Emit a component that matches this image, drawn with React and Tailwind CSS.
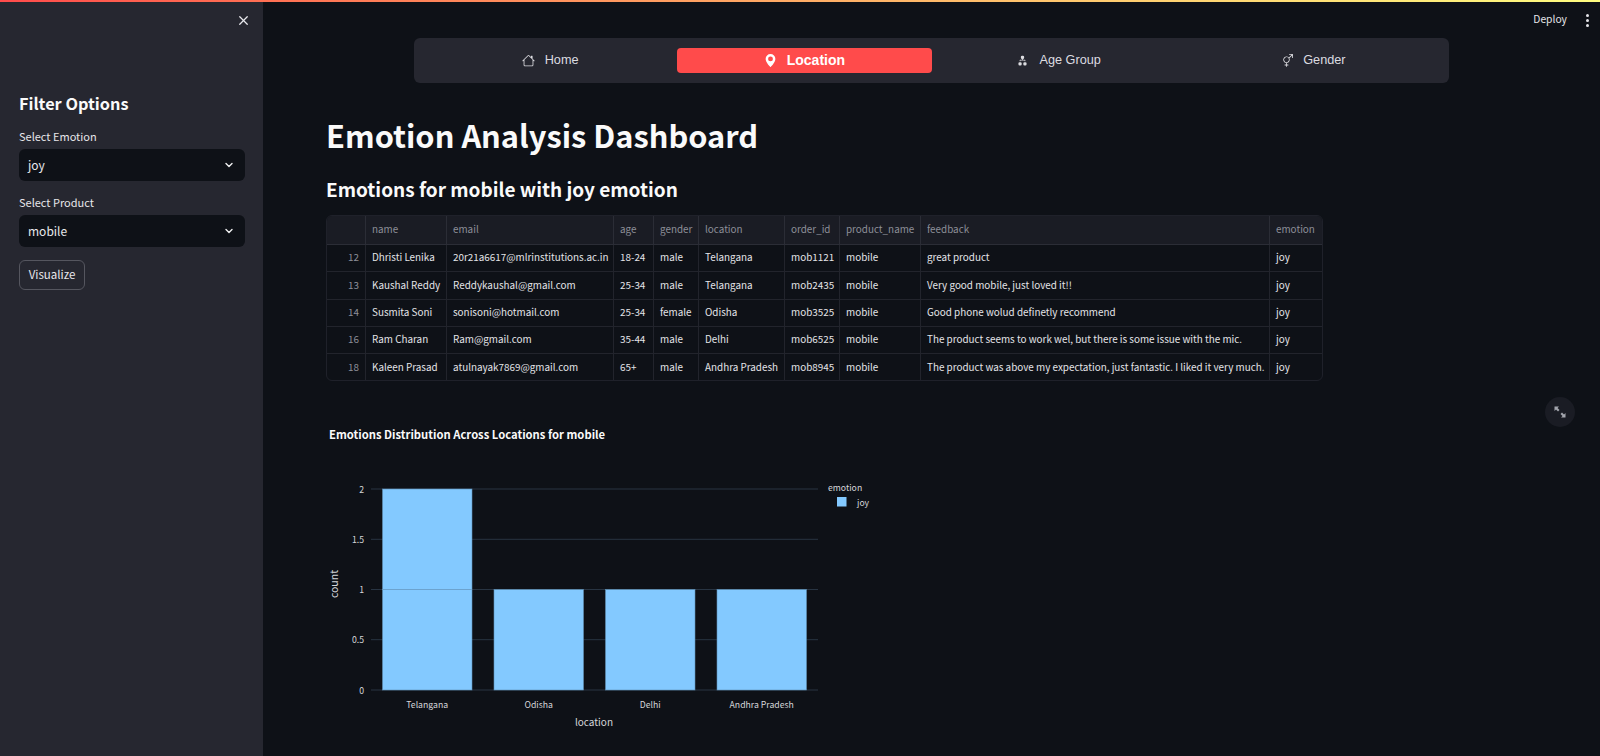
import React from 'react';
import { BsHouse, BsGeoAltFill, BsDiagram2Fill, BsGenderAmbiguous } from 'react-icons/bs';
import { X, ChevronDown } from 'lucide-react';

const FONT = 'font-["Noto_Sans_CJK_SC","Noto_Sans",sans-serif]';
const COLS = 'grid grid-cols-[39px_81px_167px_40px_45px_86px_55px_81px_349px_52px]';

const HEADERS = ['', 'name', 'email', 'age', 'gender', 'location', 'order_id', 'product_name', 'feedback', 'emotion'];
const ROWS = [
  ['12', 'Dhristi Lenika', '20r21a6617@mlrinstitutions.ac.in', '18-24', 'male', 'Telangana', 'mob1121', 'mobile', 'great product', 'joy'],
  ['13', 'Kaushal Reddy', 'Reddykaushal@gmail.com', '25-34', 'male', 'Telangana', 'mob2435', 'mobile', 'Very good mobile, just loved it!!', 'joy'],
  ['14', 'Susmita Soni', 'sonisoni@hotmail.com', '25-34', 'female', 'Odisha', 'mob3525', 'mobile', 'Good phone wolud definetly recommend', 'joy'],
  ['16', 'Ram Charan', 'Ram@gmail.com', '35-44', 'male', 'Delhi', 'mob6525', 'mobile', 'The product seems to work wel, but there is some issue with the mic.', 'joy'],
  ['18', 'Kaleen Prasad', 'atulnayak7869@gmail.com', '65+', 'male', 'Andhra Pradesh', 'mob8945', 'mobile', 'The product was above my expectation, just fantastic. I liked it very much.', 'joy'],
];

const TABS = [
  ['Home', BsHouse],
  ['Location', BsGeoAltFill],
  ['Age Group', BsDiagram2Fill],
  ['Gender', BsGenderAmbiguous],
];

function SelectBox({ label, value }) {
  return (
    <div>
      <p className="text-[11px] leading-[14px] text-[#e6e6ea]">{label}</p>
      <div className="mt-[6px] h-[32px] rounded-[6px] bg-[#0e1117] flex items-center justify-between pl-[9px] pr-[10px]">
        <span className="text-[12px] leading-none text-[#e8e8ec]">{value}</span>
        <ChevronDown size={12} strokeWidth={2.8} className="text-[#f0f0f2]" />
      </div>
    </div>
  );
}

function Sidebar() {
  return (
    <aside className="w-[263px] shrink-0 bg-[#262730] px-[19px] relative">
      <button className="absolute top-[11px] right-[12px] text-[#e8e8ec]" aria-label="Close">
        <X size={15} strokeWidth={2} />
      </button>
      <h2 className="pt-[89px] text-[16.3px] leading-[24px] font-semibold text-[#fafafa]">Filter Options</h2>
      <div className="mt-[14px] w-[226px] space-y-[14px]">
        <SelectBox label="Select Emotion" value="joy" />
        <SelectBox label="Select Product" value="mobile" />
      </div>
      <button className="mt-[13px] h-[30px] w-[66px] rounded-[6px] border border-[#55565f] text-[11.5px] text-[#e8e8ec]">Visualize</button>
    </aside>
  );
}

function NavBar() {
  return (
    <nav className='ml-[88px] w-[1035px] h-[45px] rounded-[6px] bg-[#262730] px-[9px] py-[10px] grid grid-cols-4 font-["Liberation_Sans",Arial,sans-serif]'>
      {TABS.map(([name, Icon]) => {
        const active = name === 'Location';
        return (
          <div key={name} className={`flex items-center justify-center gap-[10px] rounded-[4px] ${active ? 'bg-[#ff4b4b] text-white font-bold text-[14px]' : 'text-[#dcdce0] text-[12.7px]'}`}>
            <Icon size={13} />
            <span>{name}</span>
          </div>
        );
      })}
    </nav>
  );
}

function DataTable() {
  return (
    <div className="mt-[12px] w-[997px] h-[166px] overflow-hidden rounded-[6px] text-[9.9px] border border-[#1f212a]">
      <div className={`${COLS} h-[29px] bg-[#1a1c24] border-b border-[#2b2d36] text-[#8d8f98]`}>
        {HEADERS.map((h, i) => (
          <div key={i} className="flex items-center px-[6px] pb-[1px] border-r border-[#2b2d36] last:border-r-0">{h}</div>
        ))}
      </div>
      {ROWS.map((row) => (
        <div key={row[0]} className={`${COLS} h-[27.3px] border-b last:border-b-0 border-[#22242c] text-[#e4e4e8]`}>
          {row.map((cell, i) => (
            <div key={i} className={`flex items-center px-[6px] pb-[1px] whitespace-nowrap border-r border-[#22242c] last:border-r-0 ${i === 0 ? 'justify-end text-[#8d8f98]' : ''}`}>{cell}</div>
          ))}
        </div>
      ))}
    </div>
  );
}

function Chart() {
  const grid = [[489, '2'], [539.3, '1.5'], [589.5, '1'], [639.7, '0.5'], [690, '0']];
  const bars = [
    [382.5, 489, 'Telangana'],
    [494, 589.5, 'Odisha'],
    [605.5, 589.5, 'Delhi'],
    [717, 589.5, 'Andhra Pradesh'],
  ];
  const ox = 326;
  const oy = 410;
  return (
    <svg width="560" height="346" className="mt-[29px] block" fill="#d5d6da" fontSize="8.7">
      <text x={329 - ox} y={439 - oy} fontSize="11.25" fontWeight="700" fill="#fafafa">Emotions Distribution Across Locations for mobile</text>
      {grid.map(([y]) => (
        <line key={y} x1={371 - ox} x2={818 - ox} y1={y - oy} y2={y - oy} stroke="#283442" />
      ))}
      {bars.map(([x, y, name]) => (
        <g key={name}>
          <rect x={x - ox} y={y - oy} width="89.5" height={690 - y} fill="#83c9ff" stroke="#5f8fb5" strokeWidth="0.6" />
          <text x={x + 44.7 - ox} y={708 - oy} textAnchor="middle">{name}</text>
        </g>
      ))}
      <line x1={382.5 - ox} x2={472 - ox} y1={589.5 - oy} y2={589.5 - oy} stroke="#6ca3cf" />
      {grid.map(([y, t]) => (
        <text key={t} x={364 - ox} y={y + 3.5 - oy} textAnchor="end">{t}</text>
      ))}
      <text transform={`translate(${338 - ox} ${584 - oy}) rotate(-90)`} textAnchor="middle" fontSize="10.5">count</text>
      <text x={594 - ox} y={726 - oy} textAnchor="middle" fontSize="10">location</text>
      <text x={828 - ox} y={491 - oy} fontSize="8.7">emotion</text>
      <rect x={837 - ox} y={497 - oy} width="9.5" height="9.5" fill="#83c9ff" />
      <text x={857 - ox} y={506 - oy}>joy</text>
    </svg>
  );
}

export default function App() {
  return (
    <div className={`w-[1600px] h-[756px] overflow-hidden bg-[#0e1117] flex flex-col ${FONT}`}>
      <div className="h-[2px] shrink-0 bg-gradient-to-r from-[#ff4b4b] to-[#fffd80]" />
      <div className="flex flex-1 min-h-0">
        <Sidebar />
        <main className="relative flex-1 pl-[63px]">
          <header className="h-[36px] flex items-start justify-end pt-[9px] pr-[9px] gap-[19px] text-[10.3px] leading-[16px] text-[#e4e4e8]">
            <span>Deploy</span>
            <span className="flex flex-col gap-[2px] pt-[3px] pr-[2px]">
              <i className="block w-[3px] h-[3px] rounded-full bg-[#e4e4e8]" />
              <i className="block w-[3px] h-[3px] rounded-full bg-[#e4e4e8]" />
              <i className="block w-[3px] h-[3px] rounded-full bg-[#e4e4e8]" />
            </span>
          </header>
          <NavBar />
          <h1 className="mt-[30px] text-[30.8px] leading-[44px] font-bold text-[#fafafa]">Emotion Analysis Dashboard</h1>
          <h2 className="mt-[18px] text-[19px] leading-[28px] font-semibold text-[#fafafa]">Emotions for mobile with joy emotion</h2>
          <DataTable />
          <Chart />
          {/* fullscreen button floats over the chart element */}
          <button className="absolute left-[1282px] top-[395px] w-[30px] h-[30px] rounded-full bg-[#1a1c24] flex items-center justify-center" aria-label="Fullscreen">
            <svg width="12" height="12" viewBox="0 0 12 12" fill="#a3a5ad">
              <path d="M0.5 0.5h4.5l-1.5 1.5 2 2-1.5 1.5-2-2-1.5 1.5z" />
              <path d="M11.5 11.5h-4.5l1.5-1.5-2-2 1.5-1.5 2 2 1.5-1.5z" />
            </svg>
          </button>
        </main>
      </div>
    </div>
  );
}
